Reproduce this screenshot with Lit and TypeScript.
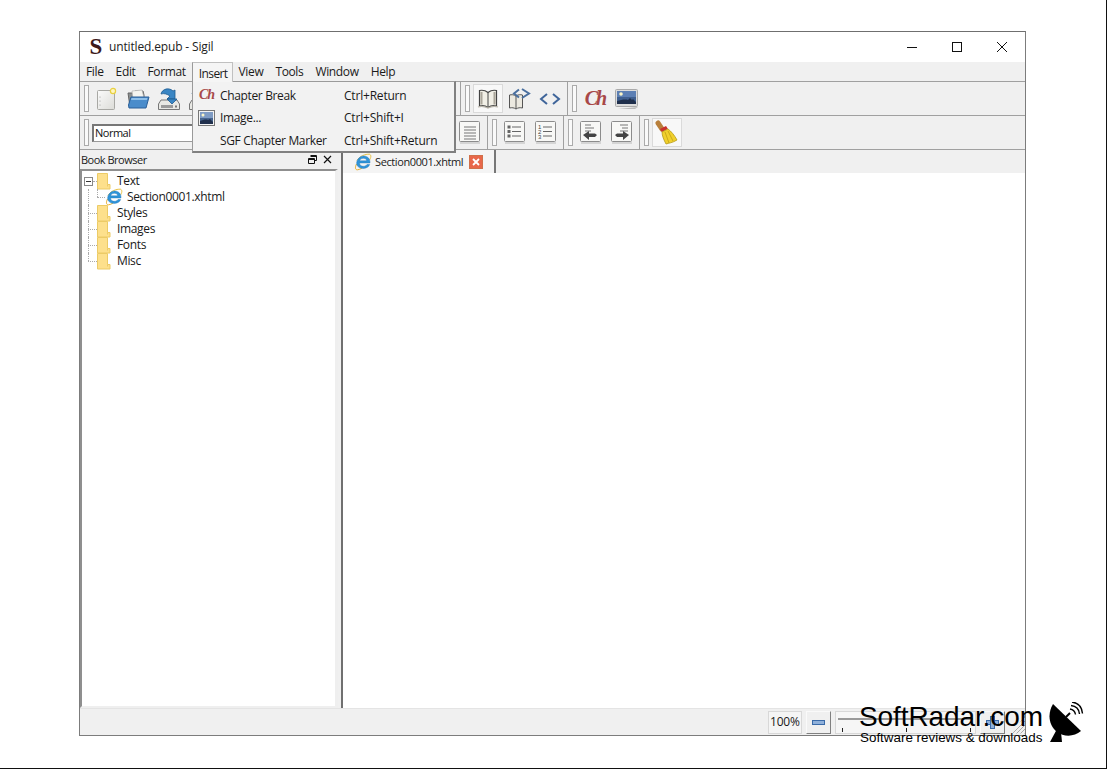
import { LitElement, html, css, svg } from "lit";
import { customElement } from "lit/decorators.js";

const page = svg`<svg width="22" height="24" viewBox="0 0 22 24"><defs><linearGradient id="pg" x1="0" y1="0" x2="1" y2="1"><stop offset="0" stop-color="#fbfbfb"/><stop offset="1" stop-color="#dcdcd8"/></linearGradient></defs><rect x="1.500" y="3.500" width="17" height="19" rx="1" fill="url(#pg)" stroke="#a8a8a4"/><circle cx="17" cy="4" r="2.600" fill="#fff6c0" stroke="#e8d040" stroke-width="1.200"/><circle cx="4" cy="10" r=".6" fill="#999"/><circle cx="4" cy="14" r=".6" fill="#999"/><circle cx="4" cy="18" r=".6" fill="#999"/></svg>`;
const folderOpen = svg`<svg width="24" height="22" viewBox="0 0 24 22"><path d="M2 5h5l2-2h8l1 4v12H4z" fill="#8a8f90" stroke="#666"/><path d="M6 3l10-1 2 8-11 1z" fill="#f4f4f0" stroke="#aaa" stroke-width=".6"/><path d="M5 9h18l-3 11H3L2.500 17z" fill="#4a8ccb" stroke="#2a5f98"/><path d="M5.500 10h16l-.6 2H5z" fill="#8fc0ea"/></svg>`;
const saveIco = svg`<svg width="24" height="24" viewBox="0 0 24 24"><path d="M4 13L1.500 17v5.500h21V17L20 13z" fill="#e8e8e4" stroke="#777"/><rect x="4" y="18" width="12" height="3" fill="#9a9a9a"/><rect x="18" y="18.500" width="2" height="2" fill="#777"/><path d="M4 7c1-5 8-7 12-3l2-1v9h-8l3-3c-3-2-6-3-9-2z" fill="#3a86c4" stroke="#1d5a90" stroke-width=".8"/><path d="M10 12h10l-5 5z" fill="#3a86c4" stroke="#1d5a90" stroke-width=".8"/></svg>`;
const bookIco = svg`<svg width="22" height="22" viewBox="0 0 22 22"><path d="M11 4.500C8.500 2.500 5 2 2.500 2.500V18c3-.8 6-.3 8.500 1.500 2.500-1.800 5.500-2.300 8.500-1.500V2.500C17 2 13.500 2.500 11 4.500z" fill="#f1efe6" stroke="#444" stroke-width="1.200"/><path d="M11 4.500v15" stroke="#444"/><path d="M4.500 4v12.500M17.500 4v12.500" stroke="#aaa59a" stroke-width="2"/><path d="M1 19c3-1 7-.5 10 1 3-1.500 7-2 10-1" fill="none" stroke="#b8b4aa" stroke-width="1.300"/></svg>`;
const bookCode = svg`<svg width="24" height="24" viewBox="0 0 24 24"><path d="M9 9C7 7.500 4.500 7.500 2.500 8v13c2.500-.6 4.500-.3 6.500 1 2-1.300 4-1.600 6.500-1V8C13.500 7.500 11 7.500 9 9z" fill="#ece9e0" stroke="#555"/><path d="M9 9v13" stroke="#555"/><path d="M15 2l7 4.500-7 4.500" fill="none" stroke="#4a6f9e" stroke-width="2"/><path d="M12 2.500L7 6.500l5 4" fill="none" stroke="#4a6f9e" stroke-width="2"/></svg>`;
const codeIco = svg`<svg width="22" height="14" viewBox="0 0 22 14"><path d="M8 2L2 7l6 5M14 2l6 5-6 5" fill="none" stroke="#3f659a" stroke-width="2"/></svg>`;
const imgIco = svg`<svg width="23" height="20" viewBox="0 0 23 20"><rect x=".500" y=".500" width="22" height="17" rx="1" fill="#dcdcdc" stroke="#aaa"/><rect x="2" y="2" width="19" height="13" fill="#3f5f8f"/><rect x="2" y="2" width="19" height="6" fill="#5c7fb4"/><circle cx="6" cy="5" r="1.800" fill="#fbf6c8"/><path d="M2 15v-3c4-1 8-2 11-1l2-2 2 2 1-1 3 3v2z" fill="#1f2f4c"/><path d="M23 18l-3 2H3z" fill="#bbb"/></svg>`;
const imgSmall = svg`<svg width="17" height="16" viewBox="0 0 17 16"><rect x=".500" y=".500" width="16" height="15" fill="#f4f4f4" stroke="#777"/><rect x="2" y="2" width="13" height="12" fill="#47658f"/><rect x="2" y="2" width="13" height="6" fill="#7f9cc4"/><circle cx="5" cy="5" r="1.500" fill="#fbf6c8"/><path d="M2 14v-3c3-1 6-2 8-1l2-1 3 3v2z" fill="#1f2f4c"/></svg>`;
const lines = svg`<path d="M5 6h12M5 9h12M5 12h12M5 15h12M5 18h12" stroke="#777" stroke-width="1"/>`;
const box = (inner: unknown) => svg`<svg width="22" height="23" viewBox="0 0 22 23"><rect x=".500" y=".500" width="20" height="20" rx="1" fill="#f8f8f6" stroke="#8c8c8c"/><path d="M1 22h20" stroke="#ccc" stroke-width="1.500"/>${inner}</svg>`;
const alignIco = box(lines);
const bullets = box(svg`<path d="M8 6h9M8 10.500h9M8 15h9" stroke="#666"/><rect x="3.500" y="4.500" width="3" height="3" fill="#666"/><rect x="3.500" y="9" width="3" height="3" fill="#666"/><rect x="3.500" y="13.500" width="3" height="3" fill="#666"/>`);
const numbers = box(svg`<path d="M8 6h9M8 10.500h9M8 15h9" stroke="#666"/><text x="3" y="8" font-size="6" font-family="Liberation Sans" fill="#444">1</text><text x="3" y="13" font-size="6" font-family="Liberation Sans" fill="#444">2</text><text x="3" y="18" font-size="6" font-family="Liberation Sans" fill="#444">3</text>`);
const outdent = box(svg`<path d="M5 4h6M5 7h9M5 10h6" stroke="#777"/><path d="M3 14l6-4v2.500h6l2 1.500-2 2H9V19z" fill="#444"/>`);
const indent = box(svg`<path d="M9 4h8M11 7h6M9 10h8" stroke="#777"/><path d="M18 14l-6-4v2.500H6l-2 1.500 2 2h6V19z" fill="#444"/>`);
const broom = svg`<svg width="26" height="26" viewBox="0 0 26 26"><path d="M4 3l4 6" stroke="#b9803c" stroke-width="5" stroke-linecap="round"/><path d="M6 9l6-3 2 3-6 3z" fill="#c9302c"/><path d="M8 12l6-3c3 2 7 7 9 11-5 3-8 3-11 4-2-4-4-8-4-12z" fill="#f1d02c" stroke="#b59a18" stroke-width=".8"/><path d="M11 12l4 11M14 11l5 10" stroke="#bf9f16" stroke-width=".8"/></svg>`;
const ie = svg`<svg width="18" height="18" viewBox="0 0 18 18"><path d="M3 7.500C6 3 11 1 15.500 1.200 17.500 2 17 5 15.500 7" fill="none" stroke="#e8c040" stroke-width="1"/><path d="M2.500 11C1 14 1 17 3.500 16.800 5 16.700 6.500 16 8 15" fill="none" stroke="#e8b030" stroke-width="1"/><path d="M16 10H5.500c.2 4 6 4.200 7.500 1.500h2.700c-1.500 5-11.700 5.500-13-.2C2 6 7 2.500 10 3c4 .3 6.200 3 6 7zM5.700 7.800h7C12.500 4.500 6.200 4.500 5.700 7.800z" fill="#2f94d8" fill-rule="evenodd" stroke="#1f74b8" stroke-width=".4"/></svg>`;
const folder = svg`<svg width="14" height="17" viewBox="0 0 14 17"><path d="M.500.500h10v11h2.500v4.500H.500z" fill="#fde08c" stroke="#eccb66"/><path d="M10.500 11.500v2" stroke="#eccb66"/></svg>`;
const dish = svg`<svg width="36" height="42" viewBox="0 0 36 42"><path d="M4 2C-2 12 0 24 8 30c7 5 17 5 24-1z" fill="#000"/><path d="M8 27L1 40h12l-1-10z" fill="#000"/><path d="M17 15l4-4" stroke="#000" stroke-width="2"/><path d="M21 7c3 .5 5 2.500 5.500 5.500M22 3.500c5 .5 8 3.500 8.500 8.500M23 0c6 .8 10 5 10.500 11.500" fill="none" stroke="#000" stroke-width="1.400"/></svg>`;

@customElement("app-root")
export class AppRoot extends LitElement {
  static styles = css`
    :host { display: block; height: 769px; background: #fff; box-sizing: border-box; border-bottom: 1px solid #111; border-right: 1px solid #111; position: relative; overflow: hidden;
      font-family: "Open Sans", "Noto Sans", sans-serif; font-size: 12px; letter-spacing: -.35px; color: #1a1a1a; padding: 31px 0 0 79px; }
    .win { width: 947px; height: 705px; box-sizing: border-box; border: 1px solid #7c7c7c; display: flex; flex-direction: column; background: #f0f0f0; border-top-color: #6f6f6f; }
    .title { height: 30px; flex: none; background: #fff; display: flex; align-items: center; padding: 0 1px 1px 0; box-sizing: border-box; }
    .logo { width: 29px; padding-left: 3px; box-sizing: border-box; text-align: center; font: bold 23px "Liberation Serif", serif; color: #3d1a1a; line-height: 28px; letter-spacing: 0; }
    .wintext { color: #222; flex: 1; letter-spacing: -.15px; }
    .ctl { width: 45px; height: 29px; display: flex; align-items: center; justify-content: center; }
    .menubar { height: 19px; flex: none; display: flex; background: #f0f0f0; border-bottom: 1px solid #a0a0a0; align-items: flex-start; }
    .mi { padding: 0 6px; line-height: 19px; white-space: nowrap; }
    .mi.on { background: #f5f5f5; position: relative; z-index: 4; box-sizing: border-box; height: 20px; line-height: 20px; padding: 1px 4px 0 6px; letter-spacing: -.6px; border: 1px solid #c0c0c0; border-left-color: #9a9a9a; border-bottom: none; }
    .tb { height: 33px; flex: none; display: flex; border-bottom: 1px solid #a0a0a0; background: #f0f0f0; }
    .g { display: flex; align-items: center; box-sizing: border-box; padding: 0 2px 0 4px; border-right: 1px solid #a0a0a0; flex: none; }
    .g.last { border-right: none; flex: 1; }
    .g.w381 { width: 381px; }
    .g.w408 { width: 408px; }
    .grip { width: 5px; height: 27px; box-sizing: border-box; border: 1px solid #ababab; margin-right: 3px; flex: none; background: #fafafa; }
    .btn { width: 30px; height: 29px; flex: none; margin-right: 1px; display: flex; align-items: center; justify-content: center; box-sizing: border-box; }
    .btn:last-child { margin-right: 0; }
    .btn.press { background: #f8f8f8; border: 1px solid #dadada; }
    .grow { flex: 1; }
    .combo { flex: 1; height: 18px; background: #fff; border: 1px solid #9a9a9a; border-left: 2px solid #777; border-top: 2px solid #777; box-sizing: border-box; line-height: 14px; padding-left: 1px; font-size: 11px; letter-spacing: -.5px; color: #111; margin-right: 4px; }
    .ch { font: italic bold 20px "Liberation Serif", serif; color: #a84848; letter-spacing: -2px; }
    .ch.sm { font-size: 14px; letter-spacing: -1px; }
    .main { flex: 1; min-height: 0; display: flex; background: #f0f0f0; }
    .dock { width: 258px; flex: none; display: flex; flex-direction: column; box-sizing: border-box; }
    .dockhead { height: 19px; flex: none; display: flex; align-items: center; font-size: 11px; letter-spacing: -.5px; justify-content: space-between; padding: 0 6px 0 1px; }
    .dockhead .ctls { display: flex; gap: 6px; align-items: center; }
    .tree { flex: 1; background: #fff; border-top: 2px solid #8f8f8f; border-left: 2px solid #8f8f8f; border-right: 3px solid #efefef; border-bottom: 2px solid #efefef; padding: 2px 0 0 0; }
    .row { height: 16px; display: flex; align-items: center; position: relative; padding-left: 15px; line-height: 16px; }
    .row .lbl { margin-left: 6px; }
    .row.child { padding-left: 23px; }
    .row.child .lbl { margin-left: 4px; }
    .hline { position: absolute; left: 6px; top: 8px; width: 9px; border-top: 1px dotted #aaa; }
    .hline.short { left: 11px; width: 4px; }
    .vline { position: absolute; left: 6px; top: 0; height: 100%; border-left: 1px dotted #aaa; }
    .row:last-child .vline { height: 8px; }
    .row.child .hline { left: 15px; width: 8px; }
    .row.child .vline2 { position: absolute; left: 15px; top: 0; height: 8px; border-left: 1px dotted #aaa; }
    .minus { position: absolute; left: 2px; top: 4px; width: 9px; height: 9px; box-sizing: border-box; border: 1px solid #888; background: #fff; display: flex; align-items: center; justify-content: center; }
    .minus::after { content: ""; width: 5px; height: 1px; background: #333; }
    .split { width: 3px; flex: none; background: #f0f0f0; }
    .central { flex: 1; display: flex; flex-direction: column; border-left: 2px solid #707070; }
    .tabs { height: 23px; flex: none; display: flex; background: #f0f0f0; }
    .tab { width: 153px; box-sizing: border-box; display: flex; align-items: center; padding-left: 11px; border-right: 2px solid #777; background: #f4f4f4; font-size: 11px; letter-spacing: -.4px; gap: 3px; }
    .x { width: 14px; height: 14px; margin-left: 3px; background: #e8674a; border: 1px solid #d0704a; box-sizing: border-box; display: flex; align-items: center; justify-content: center; }
    .doc { flex: 1; background: #fff; }
    .status { height: 27px; flex: none; display: flex; align-items: center; border-top: 1px solid #e4e4e4; box-sizing: border-box; padding-left: 688px; }
    .zoom { width: 34px; height: 23px; background: #f5f5f5; border: 1px solid #d8d8d8; box-sizing: border-box; letter-spacing: -.2px; line-height: 20px; text-align: center; }
    .sb { width: 25px; height: 23px; margin-left: 4px; box-sizing: border-box; border: 1px solid; border-color: #fafafa #808080 #808080 #fafafa; display: flex; align-items: center; justify-content: center; position: relative; }
    .sb i { width: 13px; height: 5px; background: #8fb0da; border: 1px solid #3a6aa8; box-sizing: border-box; display: block; }
    .sb.plus::after { content: ""; position: absolute; left: 9px; top: 4px; width: 5px; height: 13px; background: #8fb0da; border: 1px solid #3a6aa8; box-sizing: border-box; }
    .slider { width: 143px; height: 23px; margin-left: 4px; box-sizing: border-box; position: relative; border: 1px solid #d8d8d8; background: #f6f6f6; }
    .slider .t { position: absolute; left: 2px; right: 2px; top: 6px; height: 2px; background: #999; }
    .slider .k { position: absolute; bottom: 1px; width: 1px; height: 4px; background: #222; }
    .k1 { left: 6px; } .k2 { left: 70px; } .k3 { left: 134px; }
    .grip2 { width: 15px; height: 23px; margin-left: 5px; background: repeating-linear-gradient(135deg, transparent 0 2px, #aaa 2px 3px); clip-path: polygon(100% 20%, 100% 100%, 15% 100%); }
    .menu { position: absolute; left: 192px; top: 81px; width: 264px; height: 72px; background: #f2f2f2; border: 1px solid #9a9a9a; border-right: 2px solid #808080; border-bottom: 2px solid #808080; box-sizing: border-box; padding-top: 2px; z-index: 3; }
    .mr { height: 22.500px; display: flex; align-items: center; }
    .mic { width: 27px; display: flex; justify-content: center; flex: none; }
    .mr .n { width: 124px; }
    .mr .s { letter-spacing: -.2px; }
    .wm { position: absolute; left: 859px; top: 702px; z-index: 5; color: #000; font-family: "Liberation Sans", sans-serif; letter-spacing: 0; display: flex; }
    .wm .a { font-size: 28px; line-height: 30px; letter-spacing: -.1px; }
    .wm .b { font-size: 13.400px; line-height: 13px; margin-top: -1px; margin-left: 1px; }
    .wm .d { margin-left: 6px; }
  `;

  private g(cls: string, items: unknown) {
    return html`<div class="g ${cls}"><div class="grip"></div>${items}</div>`;
  }
  private b(icon: unknown, press = false) {
    return html`<div class="btn ${press ? "press" : ""}">${icon}</div>`;
  }

  render() {
    const tree = ["Styles", "Images", "Fonts", "Misc"];
    return html`
      <div class="win">
        <div class="title">
          <div class="logo">S</div>
          <div class="wintext">untitled.epub - Sigil</div>
          <div class="ctl"><svg width="12" height="12"><path d="M1 6.500h10" stroke="#111"/></svg></div>
          <div class="ctl"><svg width="12" height="12"><rect x="1.500" y="1.500" width="9" height="9" fill="none" stroke="#111"/></svg></div>
          <div class="ctl"><svg width="12" height="12"><path d="M1 1l10 10M11 1L1 11" stroke="#111"/></svg></div>
        </div>
        <div class="menubar">
          <span class="mi">File</span><span class="mi">Edit</span><span class="mi">Format</span>
          <span class="mi on">Insert</span><span class="mi">View</span><span class="mi">Tools</span><span class="mi">Window</span><span class="mi">Help</span>
        </div>
        <div class="tb">
          ${this.g("w381", html`${this.b(page)}${this.b(folderOpen)}${this.b(saveIco)}${this.b(saveIco)}<div class="grow"></div>`)}
          ${this.g("", html`${this.b(bookIco, true)}${this.b(bookCode)}${this.b(codeIco)}`)}
          ${this.g("last", html`${this.b(html`<span class="ch">Ch</span>`)}${this.b(imgIco)}`)}
        </div>
        <div class="tb">
          ${this.g("w408", html`<div class="combo">Normal</div>${this.b(alignIco)}`)}
          ${this.g("", html`${this.b(bullets)}${this.b(numbers)}`)}
          ${this.g("", html`${this.b(outdent)}${this.b(indent)}`)}
          ${this.g("last", this.b(broom, true))}
        </div>
        <div class="main">
          <div class="dock">
            <div class="dockhead"><span>Book Browser</span>
              <span class="ctls">
                <svg width="9" height="9"><path d="M2.500.500h6v5h-2M.500 3.500h6v5h-6z" fill="none" stroke="#111"/><path d="M2.500 1.500h6M.500 4.500h6" stroke="#111"/></svg>
                <svg width="9" height="9"><path d="M1 1l7 7M8 1L1 8" stroke="#111" stroke-width="1.200"/></svg>
              </span>
            </div>
            <div class="tree">
              <div class="row"><span class="minus"></span><span class="hline short"></span>${folder}<span class="lbl">Text</span></div>
              <div class="row child"><span class="vline"></span><span class="vline2"></span><span class="hline"></span>${ie}<span class="lbl">Section0001.xhtml</span></div>
              ${tree.map((t) => html`<div class="row"><span class="vline"></span><span class="hline"></span>${folder}<span class="lbl">${t}</span></div>`)}
            </div>
          </div>
          <div class="split"></div>
          <div class="central">
            <div class="tabs">
              <div class="tab">${ie}<span>Section0001.xhtml</span>
                <span class="x"><svg width="8" height="8"><path d="M1 1l6 6M7 1L1 7" stroke="#fff" stroke-width="1.800"/></svg></span>
              </div>
            </div>
            <div class="doc"></div>
          </div>
        </div>
        <div class="status">
          <div class="zoom">100%</div>
          <div class="sb"><i></i></div>
          <div class="slider"><div class="t"></div><div class="k k1"></div><div class="k k2"></div><div class="k k3"></div></div>
          <div class="sb plus"><i></i></div>
          <div class="grip2"></div>
        </div>
      </div>
      <div class="menu">
        <div class="mr"><span class="mic"><span class="ch sm">Ch</span></span><span class="n">Chapter Break</span><span class="s">Ctrl+Return</span></div>
        <div class="mr"><span class="mic">${imgSmall}</span><span class="n">Image...</span><span class="s">Ctrl+Shift+I</span></div>
        <div class="mr"><span class="mic"></span><span class="n">SGF Chapter Marker</span><span class="s">Ctrl+Shift+Return</span></div>
      </div>
      <div class="wm">
        <div><div class="a">SoftRadar.com</div><div class="b">Software reviews &amp; downloads</div></div>
        <div class="d">${dish}</div>
      </div>
    `;
  }
}
